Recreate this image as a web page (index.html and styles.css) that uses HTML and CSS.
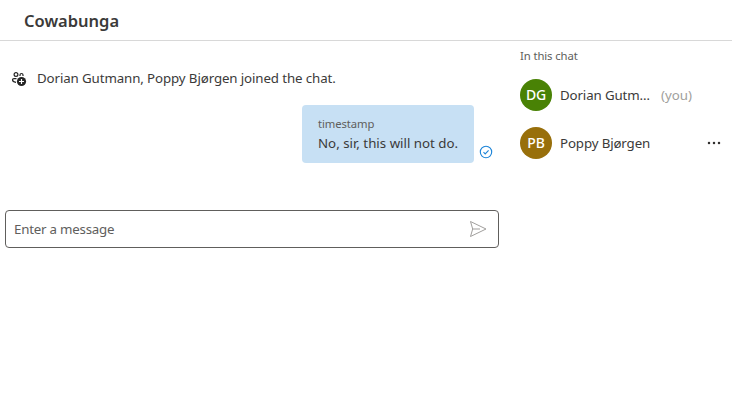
FILE: index.html
```html
<!DOCTYPE html>
<html lang="en">
<head>
<meta charset="utf-8">
<title>Cowabunga</title>
<link rel="stylesheet" href="styles.css">
</head>
<body>
<header class="topbar"><h1>Cowabunga</h1></header>
<div class="layout">
  <main class="chat">
    <div class="system">
      <svg class="system-icon" width="16" height="16" viewBox="0 0 16 16" fill="none" stroke="#242424" stroke-width="1.200"><circle cx="5" cy="3.500" r="1.900"/><path d="M9 5V4a1.500 1.500 0 0 1 3 0V5M5.500 7.600H3Q1.500 7.600 1.500 8.800C1.500 10.400 2.500 11.100 5 11.300"/><circle cx="10.500" cy="10.500" r="4.600" fill="#242424" stroke="none"/><path d="M10.500 8v5M8 10.500h5" stroke="#fff"/></svg>
      <span class="system-text">Dorian Gutmann, Poppy Bjørgen joined the chat.</span>
    </div>
    <div class="message">
      <div class="bubble"><div class="stamp">timestamp</div><div class="body">No, sir, this will not do.</div></div>
      <svg class="seen" width="14" height="14" viewBox="0 0 14 14" fill="none" stroke="#1c84d8" stroke-width="1.100"><circle cx="7" cy="7" r="5.700"/><path d="M4.500 7.200l1.700 1.700 3.400-3.500"/></svg>
    </div>
    <div class="composer"><span>Enter a message</span>
      <svg width="20" height="20" viewBox="0 0 20 20" fill="none" stroke="#a19f9d" stroke-linejoin="round"><path d="M2.500 2.500L18 10 2.500 17.500 4.700 10zM4.700 10H12"/></svg>
    </div>
  </main>
  <aside class="people">
    <h2>In this chat</h2>
    <div class="person"><span class="avatar green">DG</span><span class="name">Dorian Gutm…</span><span class="you">(you)</span></div>
    <div class="person"><span class="avatar brown">PB</span><span class="name">Poppy Bjørgen</span><svg class="more" width="16" height="16" viewBox="0 0 16 16"><circle cx="3" cy="8" r="1.250"/><circle cx="8" cy="8" r="1.250"/><circle cx="13" cy="8" r="1.250"/></svg></div>
  </aside>
</div>
</body>
</html>
```

FILE: styles.css
```css
* { box-sizing: border-box; }
body { margin: 0; background: #fff; color: #3b3a39; font: 13.3px/20px "Noto Sans", sans-serif; }
.topbar { height: 41px; padding: 2px 0 0 24px; border-bottom: 1px solid #d8d8d8; display: flex; align-items: center; }
h1 { margin: 0; font-size: 16.5px; font-weight: 600; }
.layout { display: flex; }
.chat { width: 504px; padding: 27px 5px 0; }
.system { display: flex; gap: 10px; align-items: center; padding-left: 6px; }
.system-icon { position: relative; top: 1px; }
.system-text { letter-spacing: -0.11px; }
.message { display: flex; justify-content: flex-end; align-items: flex-end; gap: 5px; margin: 17px 6px 0 0; height: 58px; }
.bubble { width: 172px; height: 58px; padding: 11px 16px; border-radius: 4px; background: #c7e0f4; white-space: nowrap; }
.stamp { font-size: 11.3px; line-height: 16px; color: #605e5c; letter-spacing: -0.1px; }
.body { padding-top: 1px; }
.seen { margin-bottom: 4px; }
.composer { height: 38px; margin-top: 47px; padding: 0 10px 0 8px; border: 1px solid #605e5c; border-radius: 4px; display: flex; align-items: center; justify-content: space-between; color: #605e5c; letter-spacing: -0.22px; }
.people { width: 228px; padding: 7px 10px 0 16px; }
h2 { margin: 0; font-size: 11.3px; font-weight: 400; line-height: 16px; color: #605e5c; letter-spacing: -0.1px; }
.person { display: flex; align-items: center; height: 48px; gap: 8px; }
h2 + .person { margin-top: 7px; }
.avatar { width: 32px; height: 32px; border-radius: 50%; color: #fff; font-size: 14px; font-weight: 500; text-align: center; line-height: 32px; letter-spacing: -0.2px; }
.green { background: #498205; }
.brown { background: #986f0b; }
.name { width: 93px; letter-spacing: -0.13px; white-space: nowrap; }
.you { color: #a19f9d; }
.more { margin-left: auto; fill: #323130; }
```
